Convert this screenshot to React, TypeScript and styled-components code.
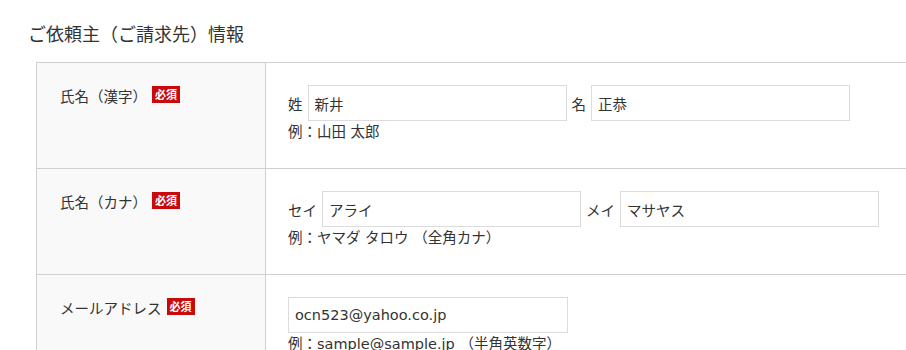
import React from 'react'
import styled, { createGlobalStyle } from 'styled-components'

const GlobalStyle = createGlobalStyle`
  html, body {
    margin: 0;
    padding: 0;
    background: #fff;
    overflow: hidden;
  }
  body {
    font-family: 'DejaVu Sans', 'Noto Sans CJK JP', sans-serif;
    color: #333;
  }
`

const App = () => {
  return (
    <>
      <GlobalStyle />
      <Page>
        <Heading>ご依頼主（ご請求先）情報</Heading>
        <FormTable>
          <Row>
            <LabelCell>
              氏名（漢字）<Required>必須</Required>
            </LabelCell>
            <FieldCell>
              <Fields>
                <FieldLabel>姓</FieldLabel>
                <TextInput defaultValue='新井' />
                <FieldLabel>名</FieldLabel>
                <TextInput defaultValue='正恭' />
              </Fields>
              <Hint>例：山田 太郎</Hint>
            </FieldCell>
          </Row>
          <Row>
            <LabelCell>
              氏名（カナ）<Required>必須</Required>
            </LabelCell>
            <FieldCell>
              <Fields>
                <FieldLabel>セイ</FieldLabel>
                <TextInput defaultValue='アライ' />
                <FieldLabel>メイ</FieldLabel>
                <TextInput defaultValue='マサヤス' />
              </Fields>
              <Hint>例：ヤマダ タロウ （全角カナ）</Hint>
            </FieldCell>
          </Row>
          <Row>
            <LabelCell>
              メールアドレス<Required>必須</Required>
            </LabelCell>
            <FieldCell>
              <Fields>
                <TextInput $wide defaultValue='ocn523@yahoo.co.jp' />
              </Fields>
              <Hint>例：sample@sample.jp （半角英数字）</Hint>
            </FieldCell>
          </Row>
        </FormTable>
      </Page>
    </>
  )
}

export default App

const Page = styled.div`
  padding: 22px 0 0 28px;
  width: 906px;
  box-sizing: border-box;
`

const Heading = styled.h2`
  margin: 0 0 14px;
  font-size: 18px;
  line-height: 26px;
  font-weight: normal;
  color: #333;
`

const FormTable = styled.div`
  margin-left: 8px;
  width: 900px;
  border-left: 1px solid #d0d0d0;
`

const Row = styled.div`
  display: grid;
  grid-template-columns: 229px 1fr;
  border-top: 1px solid #d0d0d0;
`

const LabelCell = styled.div`
  box-sizing: border-box;
  display: flex;
  align-items: flex-start;
  background: #f9f9f9;
  border-right: 1px solid #d0d0d0;
  padding: 22px 0 0 23px;
  font-size: 14.5px;
  line-height: 24px;
`

const Required = styled.span`
  display: inline-block;
  margin: 1px 0 0 5px;
  padding: 0 3px;
  height: 17px;
  line-height: 17px;
  background: #c80a0a;
  color: #fff;
  font-size: 11px;
  font-weight: bold;
  font-family: 'Noto Sans CJK JP', sans-serif;
`

const FieldCell = styled.div`
  padding: 22px 22px 25px 22px;
`

const Fields = styled.div`
  display: flex;
  align-items: center;
`

const FieldLabel = styled.span`
  font-size: 14.5px;
  margin-right: 5px;
`

const TextInput = styled.input<{ $wide?: boolean }>`
  box-sizing: border-box;
  width: ${({ $wide }) => ($wide ? '280px' : '259px')};
  height: 36px;
  margin: 0 5px 0 0;
  padding: 0 6px;
  border: 1px solid #dcdcdc;
  border-radius: 0;
  background: #fff;
  color: #333;
  font-family: 'DejaVu Sans', 'Noto Sans CJK JP', sans-serif;
  font-size: 14.5px;
  outline: none;
`

const Hint = styled.div`
  font-size: 14.5px;
  line-height: 22px;
`
